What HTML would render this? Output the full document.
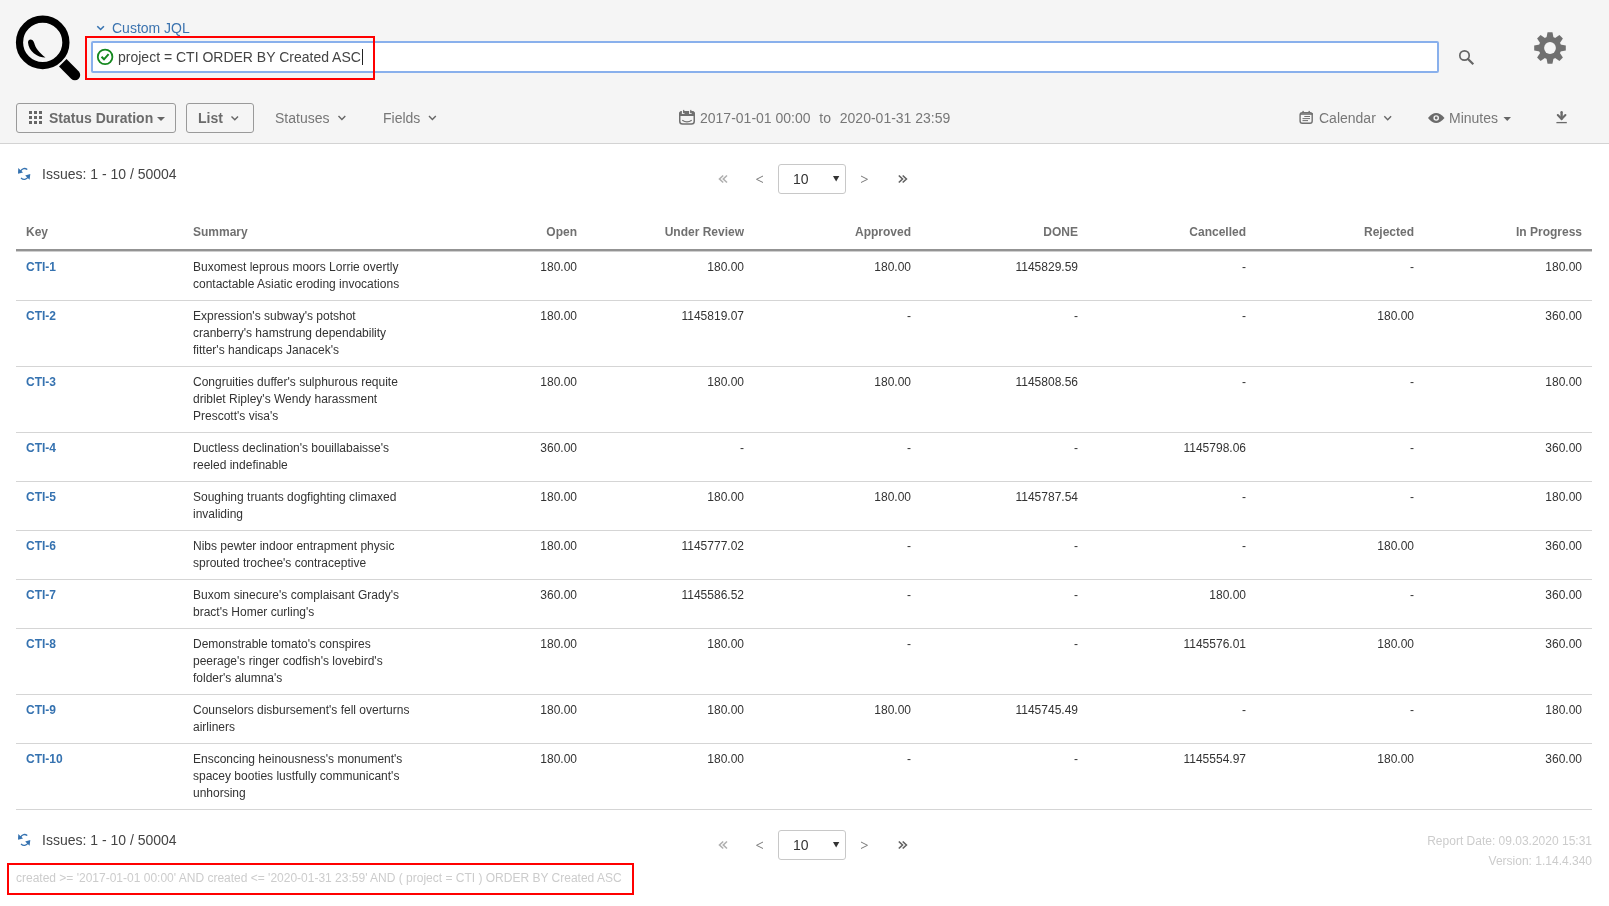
<!DOCTYPE html>
<html><head><meta charset="utf-8">
<style>
*{box-sizing:border-box}
html,body{margin:0;padding:0}
body{width:1609px;height:906px;position:relative;overflow:hidden;background:#fff;font-family:"Liberation Sans",sans-serif;color:#333}
.a{position:absolute;white-space:nowrap}
#hdr{position:absolute;left:0;top:0;width:1609px;height:144px;background:#f5f5f5;border-bottom:1px solid #d3d3d3}
.t14{font-size:14px;line-height:16px}
.t12{font-size:12px;line-height:14px}
.btn{position:absolute;border:1px solid #9a9a9a;border-radius:3px;height:30px;top:103px}
svg{position:absolute;overflow:visible}
table{position:absolute;left:16px;top:216px;border-collapse:separate;border-spacing:0;table-layout:fixed;width:1576px;font-size:12px;line-height:17px}
th{font-weight:bold;color:#707070;padding:8px 10px;border-bottom:2px solid #939393;text-align:right}
td{padding:7px 10px;border-bottom:1px solid #d5d5d5;vertical-align:top;text-align:right;color:#333;white-space:nowrap}
th.l,td.l{text-align:left}
td.k{color:#3572b0;font-weight:bold}
tbody tr:first-child td{border-top:1px solid #cfcfcf}
#root{position:absolute;left:0;top:0;width:1609px;height:906px;will-change:transform}
</style></head><body>
<div id="root">
<div id="hdr"></div>

<!-- logo -->
<svg style="left:0;top:0" width="100" height="100" viewBox="0 0 100 100">
  <circle cx="42.7" cy="42.4" r="23.2" fill="none" stroke="#000" stroke-width="7.2"/>
  <path d="M66.5 59 L78.65 71.15 A5.3 5.3 0 0 1 71.15 78.65 L59 66.5 Z" fill="#000"/>
  <path d="M28 42.5 C28 38.5 33 38.5 34.2 43 C35.5 48 39 52.5 45.5 57.6 C37 57.5 28.5 51 28 42.5 Z" fill="#000"/>
</svg>

<!-- custom jql -->
<svg style="left:0;top:0" width="10" height="10"><path d="M97.3 26.3 L100.6 29.5 L103.9 26.3" fill="none" stroke="#3572b0" stroke-width="1.6"/></svg>
<div class="a t14" style="left:112px;top:20px;color:#3b73af">Custom JQL</div>

<!-- red box top -->
<div class="a" style="left:85px;top:36px;width:290px;height:44px;border:2px solid #f00"></div>
<!-- input -->
<div class="a" style="left:91px;top:41px;width:1348px;height:32px;border:2px solid #89b0ec;border-radius:2px;background:#fff"></div>
<div class="a" style="left:85px;top:36px;width:290px;height:44px;border:2px solid #f00;border-left:none;border-right:2px solid #f00;border-top:none;border-bottom:none"></div>
<svg style="left:0;top:0" width="10" height="10">
  <circle cx="105.1" cy="56.9" r="7.3" fill="none" stroke="#14881e" stroke-width="1.8"/>
  <path d="M101.5 56.8 L104 59.3 L108.6 54.2" fill="none" stroke="#14881e" stroke-width="2"/>
</svg>
<div class="a t14" style="left:118px;top:49px;color:#444">project = CTI ORDER BY Created ASC</div>
<div class="a" style="left:362px;top:49px;width:1px;height:16px;background:#222"></div>

<!-- search icon -->
<svg style="left:0;top:0" width="10" height="10">
  <circle cx="1464.5" cy="55.5" r="4.7" fill="none" stroke="#666" stroke-width="1.7"/>
  <path d="M1468 59 L1472.5 63.5" stroke="#666" stroke-width="2.2" stroke-linecap="square"/>
</svg>
<!-- gear -->
<svg style="left:1534px;top:32px" width="32" height="32" viewBox="-16 -16 32 32">
  <g fill="#707070">
    <circle r="11.2"/>
    <path d="M-2.45 -15.8 L2.45 -15.8 L3.8 -9 L-3.8 -9 Z"/>
    <path d="M-2.45 -15.8 L2.45 -15.8 L3.8 -9 L-3.8 -9 Z" transform="rotate(45)"/>
    <path d="M-2.45 -15.8 L2.45 -15.8 L3.8 -9 L-3.8 -9 Z" transform="rotate(90)"/>
    <path d="M-2.45 -15.8 L2.45 -15.8 L3.8 -9 L-3.8 -9 Z" transform="rotate(135)"/>
    <path d="M-2.45 -15.8 L2.45 -15.8 L3.8 -9 L-3.8 -9 Z" transform="rotate(180)"/>
    <path d="M-2.45 -15.8 L2.45 -15.8 L3.8 -9 L-3.8 -9 Z" transform="rotate(225)"/>
    <path d="M-2.45 -15.8 L2.45 -15.8 L3.8 -9 L-3.8 -9 Z" transform="rotate(270)"/>
    <path d="M-2.45 -15.8 L2.45 -15.8 L3.8 -9 L-3.8 -9 Z" transform="rotate(315)"/>
  </g>
  <circle r="5.9" fill="#f5f5f5"/>
</svg>

<!-- toolbar -->
<div class="btn" style="left:16px;width:160px"></div>
<svg style="left:0;top:0" width="10" height="10"><g fill="#666">
  <rect x="29" y="111" width="3" height="3"/><rect x="34" y="111" width="3" height="3"/><rect x="39" y="111" width="3" height="3"/>
  <rect x="29" y="116" width="3" height="3"/><rect x="34" y="116" width="3" height="3"/><rect x="39" y="116" width="3" height="3"/>
  <rect x="29" y="121" width="3" height="3"/><rect x="34" y="121" width="3" height="3"/><rect x="39" y="121" width="3" height="3"/>
  <path d="M157 117 L165 117 L161 121 Z"/>
</g></svg>
<div class="a t14" style="left:49px;top:110px;font-weight:bold;color:#6b6b6b">Status Duration</div>

<div class="btn" style="left:186px;width:68px"></div>
<div class="a t14" style="left:198px;top:110px;font-weight:bold;color:#6b6b6b">List</div>
<svg style="left:0;top:0" width="10" height="10"><g fill="none" stroke="#666" stroke-width="1.4">
  <path d="M231.5 116.5 L234.8 119.8 L238 116.5"/>
  <path d="M338.5 116 L341.9 119.5 L345.3 116"/>
  <path d="M429 116 L432.4 119.5 L435.8 116"/>
  <path d="M1384.3 116.3 L1387.7 119.7 L1391.1 116.3"/>
</g></svg>
<div class="a t14" style="left:275px;top:110px;color:#777">Statuses</div>
<div class="a t14" style="left:383px;top:110px;color:#777">Fields</div>

<!-- date range -->
<svg style="left:0;top:0" width="10" height="10">
  <rect x="679.75" y="111.75" width="14.5" height="12.3" rx="2.8" fill="none" stroke="#707070" stroke-width="1.5"/>
  <path d="M679 116 L679 114 Q679 111 682 111 L692 111 Q695 111 695 114 L695 116 Z" fill="#707070"/>
  <rect x="681.9" y="110.2" width="1.2" height="3.6" fill="#f5f5f5"/>
  <rect x="689.1" y="110.2" width="1.2" height="3.6" fill="#f5f5f5"/>
  <rect x="681.9" y="112.9" width="2.6" height="0.9" fill="#f5f5f5"/>
  <rect x="689.1" y="112.9" width="2.6" height="0.9" fill="#f5f5f5"/>
  <rect x="683.1" y="109.9" width="1.2" height="3" fill="#707070"/>
  <rect x="690.2" y="109.9" width="1.2" height="3" fill="#707070"/>
  <path d="M682.3 120.3 Q687 123.6 691.7 120.3" fill="none" stroke="#707070" stroke-width="1.3"/>
</svg>
<div class="a t14" style="left:700px;top:110px;color:#777">2017-01-01 00:00&nbsp;&nbsp;<span style="margin:0 1px">to</span>&nbsp;&nbsp;2020-01-31 23:59</div>

<!-- calendar -->
<svg style="left:0;top:0" width="10" height="10">
  <rect x="1300.1" y="112.6" width="12.1" height="10.7" rx="2.2" fill="none" stroke="#707070" stroke-width="1.4"/>
  <path d="M1300 114 L1313 114" stroke="#707070" stroke-width="1.6"/>
  <rect x="1302.4" y="110.9" width="1.4" height="2" fill="#707070"/>
  <rect x="1308.5" y="110.9" width="1.4" height="2" fill="#707070"/>
  <path d="M1304.3 116.5 L1310 116.5 M1302.5 118.6 L1310 118.6 M1302.5 120.6 L1308 120.6" stroke="#707070" stroke-width="1"/>
</svg>
<div class="a t14" style="left:1319px;top:110px;color:#777">Calendar</div>

<!-- eye -->
<svg style="left:0;top:0" width="10" height="10">
  <path d="M1428 118 Q1436 108 1444.5 118 Q1436 128 1428 118 Z" fill="#6b6b6b"/>
  <circle cx="1436.2" cy="118" r="2.8" fill="#f5f5f5"/>
  <circle cx="1436.2" cy="118" r="1.4" fill="#6b6b6b"/>
  <path d="M1503.5 117 L1511 117 L1507.25 121 Z" fill="#666"/>
</svg>
<div class="a t14" style="left:1449px;top:110px;color:#777">Minutes</div>
<!-- download -->
<svg style="left:0;top:0" width="10" height="10"><g fill="none" stroke="#6a6a6a">
  <path d="M1561.6 112.2 L1561.6 118.5" stroke-width="2.4" stroke-linecap="round"/>
  <path d="M1557.8 115 L1561.6 118.9 L1565.4 115" stroke-width="2.1" stroke-linecap="round"/>
  <path d="M1556.4 122.6 L1566.8 122.6" stroke-width="1.3"/>
</g></svg>

<!-- top pagination row -->
<svg style="left:0;top:0" width="10" height="10"><g fill="none" stroke="#3572b0" stroke-width="1.3">
  <path d="M20.3 171.3 Q23.5 166.8 27.3 169.6"/>
  <path d="M21 178 Q24.8 181.3 28.6 176.6"/>
</g><g fill="#3572b0"><path d="M18.3 168 L18 173.8 L23 172.5 Z"/><path d="M25.2 175.4 L30.3 174 L29.6 179.7 Z"/></g></svg>
<div class="a t14" style="left:42px;top:166px;color:#444">Issues: 1 - 10 / 50004</div>

<div class="a" style="left:0;top:0px;width:1px;height:1px">
<svg style="left:0;top:0" width="10" height="10">
  <g fill="none" stroke="#b0b0b0" stroke-width="1.6"><path d="M723.2 175.5 L719.5 179 L723.2 182.5"/><path d="M727 175.5 L723.3 179 L727 182.5"/></g>
  <path d="M763 176 L756.5 179.3 L763 182.5" fill="none" stroke="#7a7a7a" stroke-width="1"/>
  <path d="M861 176 L867.5 179.3 L861 182.5" fill="none" stroke="#7a7a7a" stroke-width="1"/>
  <g fill="none" stroke="#626262" stroke-width="1.6"><path d="M898.8 175.5 L902.5 179 L898.8 182.5"/><path d="M902.7 175.5 L906.4 179 L902.7 182.5"/></g>
</svg>
<div class="a" style="left:778px;top:164px;width:68px;height:30px;border:1px solid #c8c8c8;border-radius:3px;background:#fff"></div>
<div class="a t14" style="left:793px;top:171px;color:#333">10</div>
<svg style="left:0;top:0" width="10" height="10"><path d="M833 176 L839.3 176 L836.15 181.6 Z" fill="#333"/></svg>
</div>

<table>
<colgroup><col style="width:167px"><col style="width:237px"><col style="width:167px"><col style="width:167px"><col style="width:167px"><col style="width:167px"><col style="width:168px"><col style="width:168px"><col style="width:168px"></colgroup>
<thead><tr><th class="l">Key</th><th class="l">Summary</th><th>Open</th><th>Under Review</th><th>Approved</th><th>DONE</th><th>Cancelled</th><th>Rejected</th><th>In Progress</th></tr></thead>
<tbody>
<tr><td class="l k">CTI-1</td><td class="l">Buxomest leprous moors Lorrie overtly<br>contactable Asiatic eroding invocations</td><td>180.00</td><td>180.00</td><td>180.00</td><td>1145829.59</td><td>-</td><td>-</td><td>180.00</td></tr>
<tr><td class="l k">CTI-2</td><td class="l">Expression's subway's potshot<br>cranberry's hamstrung dependability<br>fitter's handicaps Janacek's</td><td>180.00</td><td>1145819.07</td><td>-</td><td>-</td><td>-</td><td>180.00</td><td>360.00</td></tr>
<tr><td class="l k">CTI-3</td><td class="l">Congruities duffer's sulphurous requite<br>driblet Ripley's Wendy harassment<br>Prescott's visa's</td><td>180.00</td><td>180.00</td><td>180.00</td><td>1145808.56</td><td>-</td><td>-</td><td>180.00</td></tr>
<tr><td class="l k">CTI-4</td><td class="l">Ductless declination's bouillabaisse's<br>reeled indefinable</td><td>360.00</td><td>-</td><td>-</td><td>-</td><td>1145798.06</td><td>-</td><td>360.00</td></tr>
<tr><td class="l k">CTI-5</td><td class="l">Soughing truants dogfighting climaxed<br>invaliding</td><td>180.00</td><td>180.00</td><td>180.00</td><td>1145787.54</td><td>-</td><td>-</td><td>180.00</td></tr>
<tr><td class="l k">CTI-6</td><td class="l">Nibs pewter indoor entrapment physic<br>sprouted trochee's contraceptive</td><td>180.00</td><td>1145777.02</td><td>-</td><td>-</td><td>-</td><td>180.00</td><td>360.00</td></tr>
<tr><td class="l k">CTI-7</td><td class="l">Buxom sinecure's complaisant Grady's<br>bract's Homer curling's</td><td>360.00</td><td>1145586.52</td><td>-</td><td>-</td><td>180.00</td><td>-</td><td>360.00</td></tr>
<tr><td class="l k">CTI-8</td><td class="l">Demonstrable tomato's conspires<br>peerage's ringer codfish's lovebird's<br>folder's alumna's</td><td>180.00</td><td>180.00</td><td>-</td><td>-</td><td>1145576.01</td><td>180.00</td><td>360.00</td></tr>
<tr><td class="l k">CTI-9</td><td class="l">Counselors disbursement's fell overturns<br>airliners</td><td>180.00</td><td>180.00</td><td>180.00</td><td>1145745.49</td><td>-</td><td>-</td><td>180.00</td></tr>
<tr><td class="l k">CTI-10</td><td class="l">Ensconcing heinousness's monument's<br>spacey booties lustfully communicant's<br>unhorsing</td><td>180.00</td><td>180.00</td><td>-</td><td>-</td><td>1145554.97</td><td>180.00</td><td>360.00</td></tr>
</tbody></table>

<!-- footer -->
<svg style="left:0;top:666px" width="10" height="10"><g fill="none" stroke="#3572b0" stroke-width="1.3">
  <path d="M20.3 171.3 Q23.5 166.8 27.3 169.6"/>
  <path d="M21 178 Q24.8 181.3 28.6 176.6"/>
</g><g fill="#3572b0"><path d="M18.3 168 L18 173.8 L23 172.5 Z"/><path d="M25.2 175.4 L30.3 174 L29.6 179.7 Z"/></g></svg>
<div class="a t14" style="left:42px;top:832px;color:#444">Issues: 1 - 10 / 50004</div>

<div class="a" style="left:0;top:666px;width:1px;height:1px">
<svg style="left:0;top:0" width="10" height="10">
  <g fill="none" stroke="#b0b0b0" stroke-width="1.6"><path d="M723.2 175.5 L719.5 179 L723.2 182.5"/><path d="M727 175.5 L723.3 179 L727 182.5"/></g>
  <path d="M763 176 L756.5 179.3 L763 182.5" fill="none" stroke="#7a7a7a" stroke-width="1"/>
  <path d="M861 176 L867.5 179.3 L861 182.5" fill="none" stroke="#7a7a7a" stroke-width="1"/>
  <g fill="none" stroke="#626262" stroke-width="1.6"><path d="M898.8 175.5 L902.5 179 L898.8 182.5"/><path d="M902.7 175.5 L906.4 179 L902.7 182.5"/></g>
</svg>
<div class="a" style="left:778px;top:164px;width:68px;height:30px;border:1px solid #c8c8c8;border-radius:3px;background:#fff"></div>
<div class="a t14" style="left:793px;top:171px;color:#333">10</div>
<svg style="left:0;top:0" width="10" height="10"><path d="M833 176 L839.3 176 L836.15 181.6 Z" fill="#333"/></svg>
</div>

<div class="a t12" style="right:17px;top:834px;color:#ccc;text-align:right">Report Date: 09.03.2020 15:31</div>
<div class="a t12" style="right:17px;top:854px;color:#ccc;text-align:right">Version: 1.14.4.340</div>

<div class="a" style="left:7px;top:863px;width:627px;height:32px;border:2px solid #f00"></div>
<div class="a t12" style="left:16px;top:871px;color:#ccc">created &gt;= '2017-01-01 00:00' AND created &lt;= '2020-01-31 23:59' AND ( project = CTI ) ORDER BY Created ASC</div>

</div>
</body></html>
